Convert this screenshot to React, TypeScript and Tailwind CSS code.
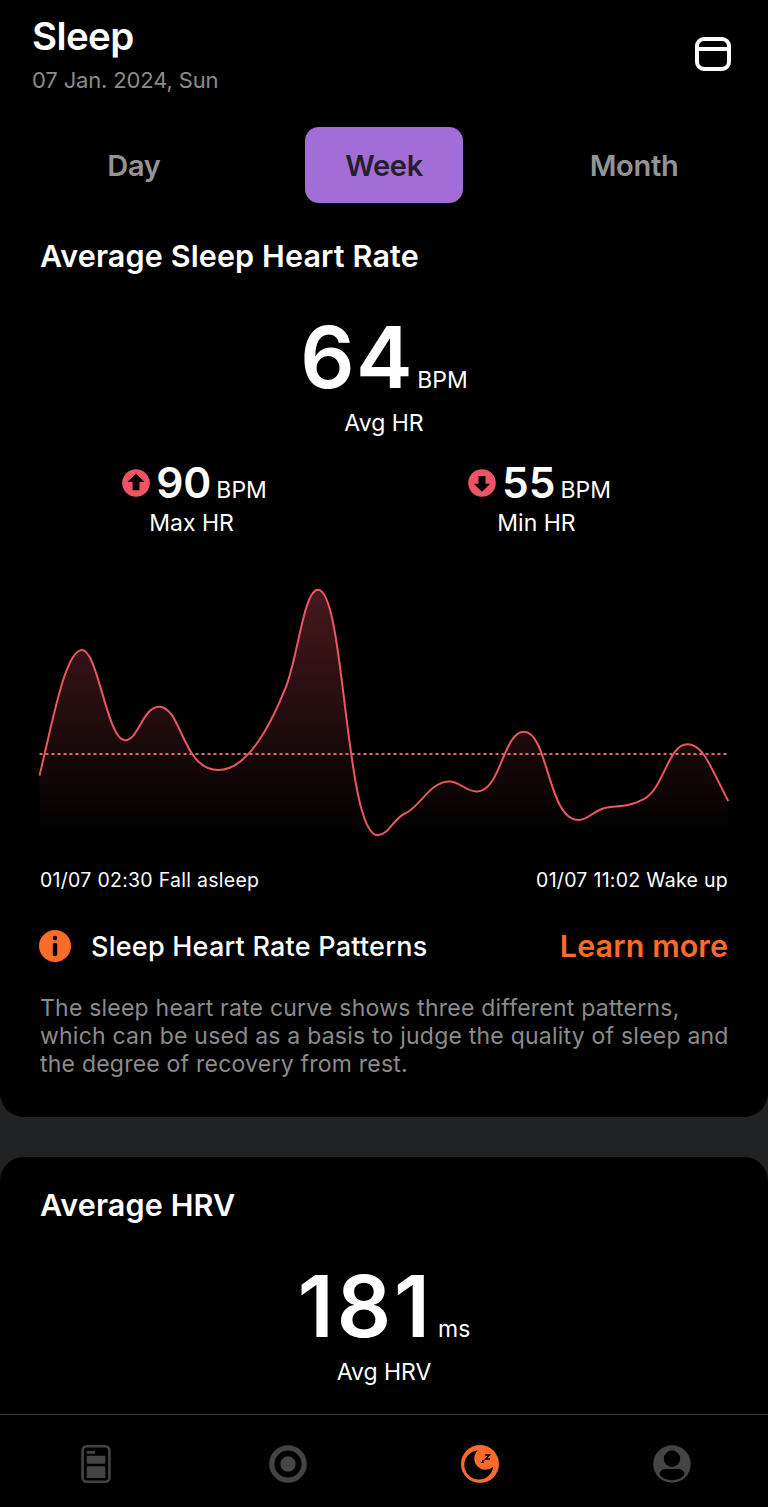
import type { ReactNode } from 'react';

const HEART_RATE_LINE = [
  'M39.5 775.5',
  'C52 725 65 650 82 650',
  'C98 650 107 740.3 125.3 740.3',
  'C138 740.3 143 706.7 159 706.7',
  'C182 706.7 182 770 218.3 770',
  'C245 770 268 732 286 686.7',
  'C298 656 304 589.8 318 589.8',
  'C345 589.8 345 835.3 378 835.3',
  'C388 835.3 394 818 405 813.5',
  'C420 807 430 781.5 449.3 781.5',
  'C460 781.5 466 791.5 476.7 791.5',
  'C501 791.5 503 731.7 524 731.7',
  'C548 731.7 548 820 578.5 820',
  'C588 820 595 809.5 606 807.7',
  'C620 805.5 628 807 643.3 799.3',
  'C664 789 668 744.3 687.3 744.3',
  'C703 744.3 709 764 728.3 801',
].join(' ');

export default function App() {
  return (
    <main className="min-h-[1507px] w-full bg-[#212224] font-['Inter',sans-serif] text-white">
      <section className="rounded-b-3xl bg-black pb-[39px]">
        <header className="flex items-center justify-between pt-4 pr-[37px] pl-8">
          <div>
            <h1 className="text-[38.5px] leading-10 font-semibold tracking-[-0.6px]">Sleep</h1>
            <p className="mt-3 text-[22px] leading-6 tracking-[-0.15px] text-[#8b8b8b]">
              07 Jan. 2024, Sun
            </p>
          </div>
          <CalendarIcon />
        </header>

        <nav
          className="mt-[35px] grid grid-cols-3 px-[9px] text-[29px] font-semibold tracking-[-0.3px]"
          aria-label="Period"
        >
          <PeriodTab label="Day" />
          <PeriodTab label="Week" active />
          <PeriodTab label="Month" />
        </nav>

        <SectionTitle className="mt-[33px]">Average Sleep Heart Rate</SectionTitle>
        <HeroMetric value="64" valueClassName="tracking-[1.5px]" unit="BPM" label="Avg HR" />

        <div className="mt-[22px] grid grid-cols-2 pr-[59px] pl-[19px]">
          <RangeMetric direction="up" value="90" label="Max HR" />
          <RangeMetric direction="down" value="55" label="Min HR" />
        </div>

        <HeartRateChart />

        <div className="mt-[26px] flex justify-between px-10 text-[19.5px] leading-7 tracking-[0.28px]">
          <span>01/07 02:30 Fall asleep</span>
          <span>01/07 11:02 Wake up</span>
        </div>

        <div className="mt-8 flex h-10 items-center px-10 leading-10">
          <InfoIcon />
          <h3 className="ml-5 pt-0.5 text-[27px] font-medium tracking-[0.23px]">
            Sleep Heart Rate Patterns
          </h3>
          <a
            className="ml-auto text-[30.5px] font-semibold tracking-[0.08px] text-[#fb6b2a]"
            href="#patterns"
          >
            Learn more
          </a>
        </div>

        <p className="mt-7 px-10 text-[23px] leading-7 tracking-[0.22px] whitespace-nowrap text-[#8b8b8b]">
          The sleep heart rate curve shows three different patterns,
          <br />
          which can be used as a basis to judge the quality of sleep and
          <br />
          the degree of recovery from rest.
        </p>
      </section>

      <section className="mt-10 rounded-t-3xl bg-black pt-7 pb-[26px]">
        <SectionTitle>Average HRV</SectionTitle>
        <HeroMetric value="181" valueClassName="mr-0.5 tracking-[3px]" unit="ms" label="Avg HRV" />
      </section>

      <TabBar />
    </main>
  );
}

function PeriodTab({ label, active = false }: { label: string; active?: boolean }) {
  return (
    <button
      className={
        active
          ? 'h-[76px] w-[158px] justify-self-center rounded-[14px] bg-[#a36dd7] pt-0.5 text-[#251f2d]'
          : 'h-[76px] w-[158px] justify-self-center rounded-[14px] pt-0.5 text-[#949494]'
      }
      type="button"
    >
      {label}
    </button>
  );
}

function SectionTitle({ children, className = '' }: { children: ReactNode; className?: string }) {
  return (
    <h2
      className={`px-10 text-[30.5px] leading-10 font-semibold tracking-[0.13px] ${className}`}
    >
      {children}
    </h2>
  );
}

function HeroMetric({
  value,
  valueClassName,
  unit,
  label,
}: {
  value: string;
  valueClassName: string;
  unit: string;
  label: string;
}) {
  return (
    <div className="mt-[42px] text-center">
      <div className="flex h-20 items-baseline justify-center gap-[3px]">
        <span className={`text-[85px] leading-[80px] font-semibold ${valueClassName}`}>
          {value}
        </span>
        <span className="text-[23px] leading-none">{unit}</span>
      </div>
      <p className="mt-[9px] text-[23px] leading-8">{label}</p>
    </div>
  );
}

function RangeMetric({
  direction,
  value,
  label,
}: {
  direction: 'up' | 'down';
  value: string;
  label: string;
}) {
  return (
    <div className="text-center">
      <div className="flex h-11 items-center justify-center pl-1.5">
        <ArrowBadge direction={direction} />
        <div className="ml-1.5 flex items-baseline gap-[5px]">
          <span className="text-[42.5px] leading-[44px] font-semibold">{value}</span>
          <span className="text-[23px] leading-none">BPM</span>
        </div>
      </div>
      <p className="mt-0.5 text-[23px] leading-8">{label}</p>
    </div>
  );
}

function HeartRateChart() {
  return (
    <svg
      className="mt-[41px] block h-[260px] w-[768px]"
      viewBox="0 580 768 260"
      fill="none"
      role="img"
      aria-label="Sleep heart rate"
    >
      <defs>
        <linearGradient id="hr-fill" gradientUnits="userSpaceOnUse" x1="0" y1="588" x2="0" y2="836">
          <stop offset="0" stopColor="#ee5362" stopOpacity="0.3" />
          <stop offset="1" stopColor="#ee5362" stopOpacity="0" />
        </linearGradient>
      </defs>
      <path d={`${HEART_RATE_LINE} L728.3 836 L39.5 836 Z`} fill="url(#hr-fill)" />
      <path d="M39.5 754H728" stroke="#ec665f" strokeWidth="2" strokeDasharray="3 3" />
      <path d={HEART_RATE_LINE} stroke="#ea5663" strokeWidth="2" />
    </svg>
  );
}

function TabBar() {
  return (
    <nav
      className="grid h-[93px] grid-cols-4 items-center justify-items-center border-t border-[#3c3c3c] bg-black pt-[5px] text-[#444444]"
      aria-label="Main"
    >
      <svg className="size-[38px]" viewBox="0 0 38 38" aria-hidden="true">
        <rect x="5.6" y="1.3" width="26.8" height="35.4" rx="4" fill="none" stroke="currentColor" strokeWidth="2.6" />
        <path d="M9.7 6H18v2.8H9.7zM9.7 10.8h18.6v8H9.7zM9.7 21.3h18.6V33H9.7z" fill="currentColor" />
      </svg>
      <svg className="size-[38px]" viewBox="0 0 38 38" aria-hidden="true">
        <circle cx="19" cy="19" r="16.2" fill="none" stroke="currentColor" strokeWidth="5.2" />
        <circle cx="19" cy="19" r="7.7" fill="currentColor" />
      </svg>
      <svg className="size-[38px] text-[#fb6b2a]" viewBox="0 0 38 38" aria-hidden="true">
        <circle cx="19" cy="19" r="19" fill="currentColor" />
        <path d="M16.8 5.5A14.5 14.5 0 1 0 32.2 21.8A11 11 0 0 1 16.8 5.5Z" fill="#000" />
        <path d="M24.2 10h4.4l-4.2 4h4.6M21 15.8h1.5l-1.3 1.6h1.5" fill="none" stroke="#000" strokeWidth="1.3" />
      </svg>
      <svg className="size-[38px]" viewBox="0 0 38 38" aria-hidden="true">
        <circle cx="19" cy="19" r="18.8" fill="currentColor" />
        <circle cx="19" cy="13.7" r="8.2" fill="#000" />
        <path d="M13 24h12c3.7 0 6.3 2.3 6.3 4.6 0 3.2-5.3 6.6-12.3 6.6S6.7 31.8 6.7 28.6C6.7 26.3 9.3 24 13 24Z" fill="#000" />
      </svg>
    </nav>
  );
}

function CalendarIcon() {
  return (
    <svg className="-mt-px h-[34px] w-9" viewBox="0 0 36 34" fill="none" stroke="#fff" strokeWidth="4" aria-hidden="true">
      <rect x="2" y="2" width="32" height="30" rx="7" />
      <path d="M2 12h32" />
    </svg>
  );
}

function ArrowBadge({ direction }: { direction: 'up' | 'down' }) {
  return (
    <svg className="size-7" viewBox="0 0 28 28" aria-hidden="true">
      <circle cx="14" cy="14" r="13.8" fill="#ef5465" />
      <path
        d={
          direction === 'up'
            ? 'M14 4.6 22.6 13h-5.2v8.3h-6.8V13H5.4Z'
            : 'M14 22.8 5.8 14.8h4.7V7h7v7.8h4.7Z'
        }
        fill="#000"
      />
    </svg>
  );
}

function InfoIcon() {
  return (
    <svg className="-ml-px size-8" viewBox="0 0 32 32" aria-hidden="true">
      <circle cx="16" cy="16" r="16" fill="#fb6b2a" />
      <circle cx="16" cy="8" r="2.3" fill="#000" />
      <rect x="13.8" y="12.7" width="4.4" height="13.5" rx="2" fill="#000" />
    </svg>
  );
}
